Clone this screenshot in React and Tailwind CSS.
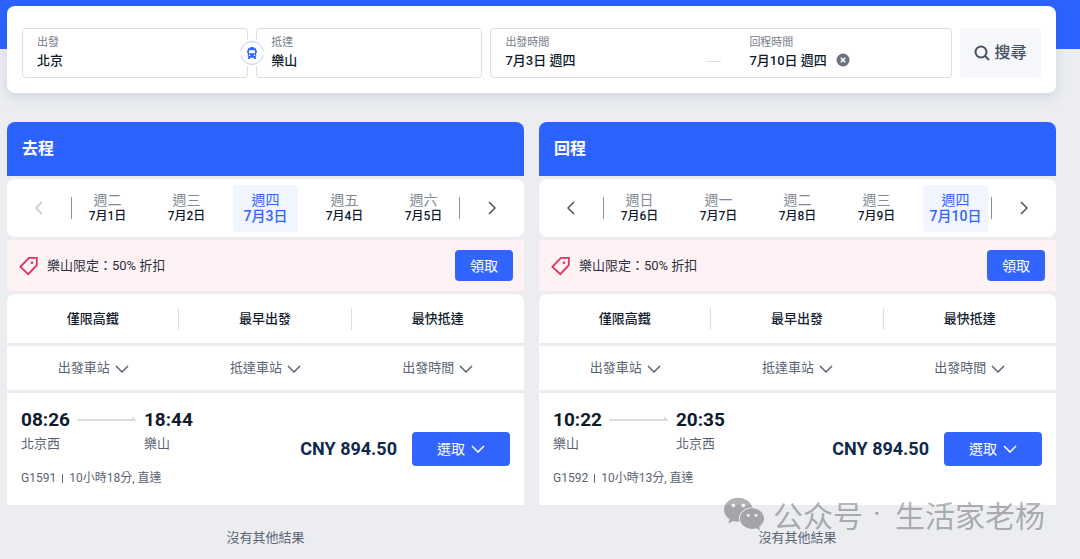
import React, { useState } from 'react';
import { FaWeixin } from 'react-icons/fa';

const trips = [
  {
    id: 'ida',
    title: '去程',
    canPrev: false,
    days: [
      ['週二', '7月1日'],
      ['週三', '7月2日'],
      ['週四', '7月3日'],
      ['週五', '7月4日'],
      ['週六', '7月5日'],
    ],
    selected: 2,
    train: {
      depart: '08:26', arrive: '18:44', from: '北京西', to: '樂山',
      number: 'G1591', duration: '10小時18分, 直達', price: 'CNY 894.50',
    },
  },
  {
    id: 'vuelta',
    title: '回程',
    canPrev: true,
    days: [
      ['週日', '7月6日'],
      ['週一', '7月7日'],
      ['週二', '7月8日'],
      ['週三', '7月9日'],
      ['週四', '7月10日'],
    ],
    selected: 4,
    train: {
      depart: '10:22', arrive: '20:35', from: '樂山', to: '北京西',
      number: 'G1592', duration: '10小時13分, 直達', price: 'CNY 894.50',
    },
  },
];

const sorts = ['僅限高鐵', '最早出發', '最快抵達'];
const filters = ['出發車站', '抵達車站', '出發時間'];

const Chevron = ({ className }) => (
  <svg viewBox="0 0 14 8" className={className} fill="none" stroke="currentColor" strokeWidth="1.5" aria-hidden="true">
    <path d="M1 1l6 6 6-6" />
  </svg>
);

const Arrow = ({ left }) => (
  <svg viewBox="0 0 8 14" className="h-[14px] w-2" fill="none" stroke="currentColor" strokeWidth="1.5" aria-hidden="true">
    <path d={left ? 'M7 1L1 7l6 6' : 'M1 1l6 6-6 6'} />
  </svg>
);

const TrainBadge = () => (
  <svg viewBox="0 0 28 28" className="h-7 w-7" aria-hidden="true">
    <circle cx="14" cy="14" r="14" fill="#fff" />
    <path d="M2.800 11.500a11.500 11.500 0 0 1 22.400 0M2.800 16.500a11.500 11.500 0 0 0 22.400 0" fill="none" stroke="#b9c9fb" />
    <path
      fillRule="evenodd"
      fill="#3264ff"
      d="M12.200 8h3.600v1.300h2.200v1.700h.8v3h-.6v3.500h-.4V20h-2v-1.300h-3.600V20h-2v-2.500h-.4V14h-.6v-3h.8V9.300h2.200zM11.200 11.300l-.3 3h6.200l-.3-3zM10.800 15.800v1.200h1.500v-1.200zM15.700 15.800v1.200h1.500v-1.200z"
    />
  </svg>
);

const TagIcon = () => (
  <svg viewBox="0 0 20 20" className="h-5 w-5" fill="none" stroke="#e0315f" strokeWidth="1.8" aria-hidden="true">
    <path d="M10 1.800h7.800v7.400L9.300 18.200 1.400 10.800z" />
    <circle cx="13" cy="6.800" r="1.300" fill="#e0315f" stroke="none" />
  </svg>
);

const Field = ({ id, label, value, onChange, className }) => (
  <div className={className}>
    <label htmlFor={id} className="block text-[11px] leading-4 text-[#777d8a]">{label}</label>
    <input
      id={id}
      value={value}
      onChange={onChange}
      className="block w-full bg-transparent text-[13px] leading-5 font-medium text-[#0f1b2d] outline-none"
    />
  </div>
);

const SearchBar = () => {
  const [datos, setDatos] = useState({
    origen: '北京',
    destino: '樂山',
    salida: '7月3日 週四',
    regreso: '7月10日 週四',
  });

  const handleChange = (e) => setDatos({ ...datos, [e.target.id]: e.target.value });

  return (
    <form
      onSubmit={(e) => e.preventDefault()}
      className="grid grid-cols-[49fr_49fr_100fr_81px] gap-2 rounded-lg bg-white px-[15px] pt-[22px] pb-[15px] shadow-[0_4px_12px_rgba(60,80,130,0.15)]"
    >
      <div className="relative rounded border border-[#dadfe6] px-[14px] py-[6px]">
        <Field id="origen" label="出發" value={datos.origen} onChange={handleChange} />
        <button type="button" aria-label="交換" className="absolute top-[10px] -right-[19px] z-10">
          <TrainBadge />
        </button>
      </div>
      <div className="rounded border border-[#dadfe6] px-[14px] py-[6px]">
        <Field id="destino" label="抵達" value={datos.destino} onChange={handleChange} />
      </div>
      <div className="flex rounded border border-[#dadfe6] px-[14px] py-[6px]">
        <Field id="salida" label="出發時間" value={datos.salida} onChange={handleChange} className="w-[201px]" />
        <span className="mt-[26px] mr-7 h-px w-[15px] bg-[#dadfe6]" />
        <Field id="regreso" label="回程時間" value={datos.regreso} onChange={handleChange} className="w-[87px]" />
        <button type="button" aria-label="清除" onClick={() => setDatos({ ...datos, regreso: '' })} className="mt-[14px]">
          <svg viewBox="0 0 14 14" className="h-[14px] w-[14px]" aria-hidden="true">
            <circle cx="7" cy="7" r="6.500" fill="#6b7383" />
            <path d="M4.800 4.800l4.400 4.400M9.200 4.800L4.800 9.200" stroke="#fff" strokeWidth="1.500" />
          </svg>
        </button>
      </div>
      <button type="submit" className="flex items-center justify-center gap-1 rounded bg-[#f5f7fb] text-base font-medium text-[#455061]">
        <svg viewBox="0 0 16 16" className="h-4 w-4" fill="none" stroke="currentColor" strokeWidth="2" aria-hidden="true">
          <circle cx="7" cy="7" r="5.500" />
          <path d="M11 11l4 4" />
        </svg>
        搜尋
      </button>
    </form>
  );
};

const DayPicker = ({ days, initial, canPrev }) => {
  const [selected, setSelected] = useState(initial);

  return (
    <div className="flex h-[58px] items-center rounded-lg bg-white">
      <button aria-label="上一頁" disabled={!canPrev} className="flex w-16 justify-center text-[#455061] disabled:text-[#c0c5ce]">
        <Arrow left />
      </button>
      <div className="h-[22px] w-px bg-[#8592a6]" />
      <div className="grid flex-1 grid-cols-5 gap-[14px] px-[3px]">
        {days.map(([week, date], i) => (
          <button
            key={date}
            onClick={() => setSelected(i)}
            className={
              i === selected
                ? 'h-[47px] rounded bg-[#f0f5ff] text-sm leading-4 whitespace-nowrap text-[#3264ff]'
                : 'h-[47px] rounded text-xs leading-4 whitespace-nowrap text-[#0f1b2d]'
            }
          >
            <span className={i === selected ? 'block text-sm leading-4' : 'block text-sm leading-4 text-[#838996]'}>{week}</span>
            <span className="block font-medium">{date}</span>
          </button>
        ))}
      </div>
      <div className="h-[22px] w-px bg-[#8592a6]" />
      <button aria-label="下一頁" className="flex w-16 justify-center text-[#455061]">
        <Arrow />
      </button>
    </div>
  );
};

const Trip = ({ trip }) => {
  const { train } = trip;

  return (
    <section className="flex flex-col gap-[3px]">
      <h2 className="flex h-[54px] items-center rounded-t-lg bg-[#2c62ff] px-[15px] text-base font-bold text-white">{trip.title}</h2>

      <DayPicker days={trip.days} initial={trip.selected} canPrev={trip.canPrev} />

      <div className="flex h-[51px] items-center gap-2 bg-[#fff2f5] pr-[11px] pl-3 text-[13px] text-[#29303d]">
        <TagIcon />
        <span>樂山限定：50% 折扣</span>
        <button className="ml-auto h-[31px] w-[58px] rounded bg-[#3264ff] text-sm text-white">領取</button>
      </div>

      <div className="grid h-[49px] grid-cols-3 items-center rounded-t-lg bg-white">
        {sorts.map((s) => (
          <button key={s} className="h-[22px] border-r border-[#dadfe6] text-[13px] leading-5 font-medium text-[#0f1b2d] last:border-0">
            {s}
          </button>
        ))}
      </div>

      <div className="grid h-11 grid-cols-3 items-center justify-items-center bg-white text-[#5b6473]">
        {filters.map((f) => (
          <div key={f} className="relative">
            <select aria-label={f} className="block appearance-none bg-transparent pr-[18px] text-[13px] leading-5">
              <option>{f}</option>
            </select>
            <Chevron className="pointer-events-none absolute top-[7px] right-0 h-2 w-[14px]" />
          </div>
        ))}
      </div>

      <article className="flex h-28 items-center justify-between bg-white px-[14px]">
        <div className="text-[#5b6473]">
          <div className="flex gap-[7px] text-[13px] leading-5">
            <div>
              <p className="mb-1 text-[19px] leading-5 font-bold text-[#0f1b2d]">{train.depart}</p>
              <p>{train.from}</p>
            </div>
            <svg viewBox="0 0 60 6" className="mt-[6px] h-[6px] w-[60px]" aria-hidden="true">
              <path d="M0 3h55V0l5 5H0z" fill="#dadfe6" />
            </svg>
            <div>
              <p className="mb-1 text-[19px] leading-5 font-bold text-[#0f1b2d]">{train.arrive}</p>
              <p>{train.to}</p>
            </div>
          </div>
          <p className="mt-[14px] flex items-center gap-[6px] text-xs leading-5">
            {train.number}
            <span className="h-[9px] w-px bg-[#5b6473]" />
            {train.duration}
          </p>
        </div>
        <div className="flex items-center gap-[15px]">
          <p className="text-lg font-bold text-[#0f294d]">{train.price}</p>
          <button className="flex h-[34px] w-[98px] items-center justify-center gap-[6px] rounded bg-[#3264ff] text-sm text-white">
            選取
            <Chevron className="h-2 w-[14px]" />
          </button>
        </div>
      </article>

      <p className="mt-5 text-center text-[13px] leading-5 text-[#5b6473]">沒有其他結果</p>
    </section>
  );
};

const App = () => (
  <div className="relative min-h-screen overflow-hidden bg-[#ebedf1] font-[Roboto,'Noto_Sans_CJK_TC',sans-serif]">
    <div className="h-[49px] bg-[#2c62ff]" />
    <main className="relative -mt-[43px] pr-6 pl-[7px]">
      <SearchBar />
      <div className="mt-[29px] grid grid-cols-2 gap-[15px]">
        {trips.map((t) => (
          <Trip key={t.id} trip={t} />
        ))}
      </div>
    </main>
    <div className="pointer-events-none absolute right-[35px] bottom-[23px] flex items-center font-['Noto_Sans_CJK_SC',sans-serif] text-[30px] leading-[44px] text-black/30">
      <FaWeixin className="mr-2 h-[42px] w-[42px]" />
      <span>公众号</span>
      <span className="mr-1 w-7 text-center font-[Roboto,sans-serif]">·</span>
      <span>生活家老杨</span>
    </div>
  </div>
);

export default App;
